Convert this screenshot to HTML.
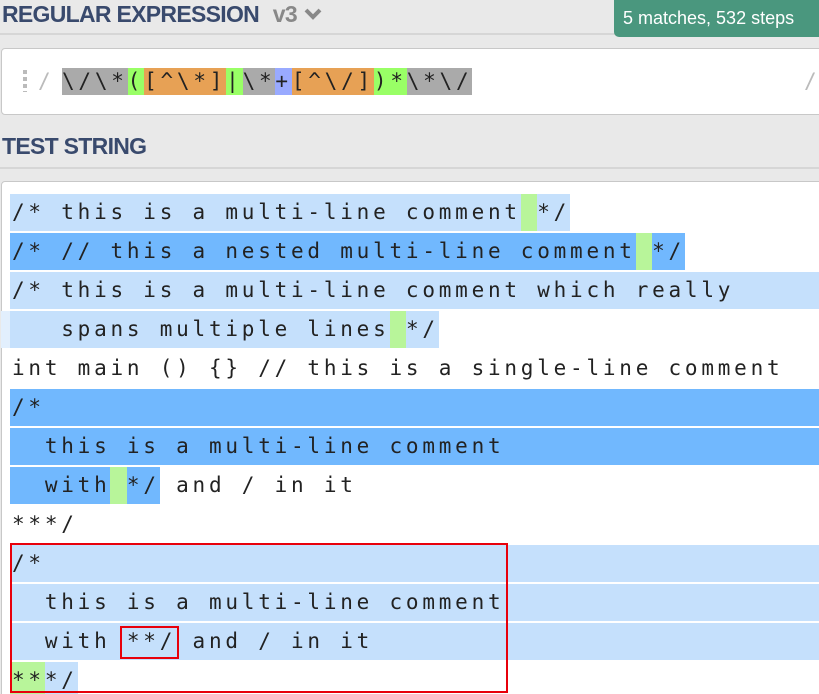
<!DOCTYPE html>
<html style="overflow:hidden;height:694px"><head><meta charset="utf-8"><style>
body{margin:0;width:819px;height:694px;background:#e9e9e9;position:relative;overflow:hidden;font-family:"Liberation Sans",sans-serif}
.h{position:absolute;left:2px;font-weight:bold;font-size:23px;color:#394a6d;letter-spacing:-0.7px}
.hr{position:absolute;left:0;width:819px;height:2px;background:#d6d6d6}
.badge{position:absolute;left:614px;top:0;width:205px;height:37px;background:#4a977e;border-radius:0 0 0 5px;color:#fff;font-size:18px;line-height:37px;padding-left:9px;box-sizing:border-box}
.box{position:absolute;background:#fff;border:1px solid #c8c8c8;border-radius:4px}
.m{font-family:"DejaVu Sans Mono","Liberation Mono",monospace;font-size:21px;letter-spacing:3.77px;color:#222;white-space:pre}
.row{position:absolute;left:10px;height:37px;line-height:37px;padding-left:2px}
.row span{display:inline-block;height:37px;vertical-align:top}
.L{background:#c5e0fc}.D{background:#71b8fe}.G{background:#b8f59a}
.rg{position:absolute;top:68px;height:27px;line-height:27px;left:62px}
.rg span{display:inline-block;height:27px;vertical-align:top}
.g{background:#aaa}.gr{background:#99ff66}.o{background:#e7a155}.b{background:#99aaff}
</style></head><body>
<div class="h" style="top:1px">REGULAR EXPRESSION <span style="color:#888;margin-left:8px">v3</span> <svg width="20" height="14" viewBox="0 0 20 14" style="vertical-align:1px"><path d="M3 3l7 7 7-7" stroke="#888" stroke-width="4" fill="none"/></svg></div>
<div class="hr" style="top:33px"></div>
<div class="badge">5 matches, 532 steps</div>
<div class="box" style="left:1px;top:48px;width:830px;height:65px"></div>
<div style="position:absolute;left:23px;top:70px;width:4px;height:22px;background:repeating-linear-gradient(#bbb 0 4px,transparent 4px 7px)"></div>
<div class="m" style="position:absolute;left:38px;top:68px;line-height:27px;color:#bbb">/</div>
<div class="m" style="position:absolute;left:804px;top:68px;line-height:27px;color:#bbb">/</div>
<div class="m rg"><span class="g">\/\*</span><span class="gr">(</span><span class="o">[^\*]</span><span class="gr">|</span><span class="g">\*</span><span class="b">+</span><span class="o">[^\/]</span><span class="gr">)*</span><span class="g">\*\/</span></div>
<div class="h" style="top:133px">TEST STRING</div>
<div class="hr" style="top:167px"></div>
<div class="box" style="left:1px;top:181px;width:830px;height:530px"></div>
<div class="m">
<div class="row" style="top:194px;padding-left:0"><span class="L" style="padding-left:2px">/* this is a multi-line comment</span><span class="G"> </span><span class="L">*/</span></div>
<div class="row" style="top:233px;padding-left:0"><span class="D" style="padding-left:2px">/* // this a nested multi-line comment</span><span class="G"> </span><span class="D">*/</span></div>
<div class="row L" style="top:272px;width:807px">/* this is a multi-line comment which really</div>
<div class="row" style="top:311px;left:1px;padding-left:0"><span style="background:#e2effd;padding-left:9px"></span><span class="L" style="padding-left:2px">   spans multiple lines</span><span class="G"> </span><span class="L">*/</span></div>
<div class="row" style="top:350px">int main () {} // this is a single-line comment</div>
<div class="row D" style="top:389px;width:807px">/*</div>
<div class="row D" style="top:428px;width:807px">  this is a multi-line comment</div>
<div class="row" style="top:467px;padding-left:0"><span class="D" style="padding-left:2px">  with</span><span class="G"> </span><span class="D">*/</span> and / in it</div>
<div class="row" style="top:506px">***/</div>
<div class="row L" style="top:545px;width:807px">/*</div>
<div class="row L" style="top:584px;width:807px">  this is a multi-line comment</div>
<div class="row L" style="top:623px;width:807px">  with **/ and / in it</div>
<div class="row" style="top:662px;padding-left:0"><span class="G" style="padding-left:2px">**</span><span class="L">*/</span></div>
</div>
<div style="position:absolute;left:10px;top:543px;width:494px;height:146px;border:2px solid #e8000b"></div>
<div style="position:absolute;left:120px;top:626px;width:55px;height:29px;border:2px solid #e8000b"></div>
</body></html>
